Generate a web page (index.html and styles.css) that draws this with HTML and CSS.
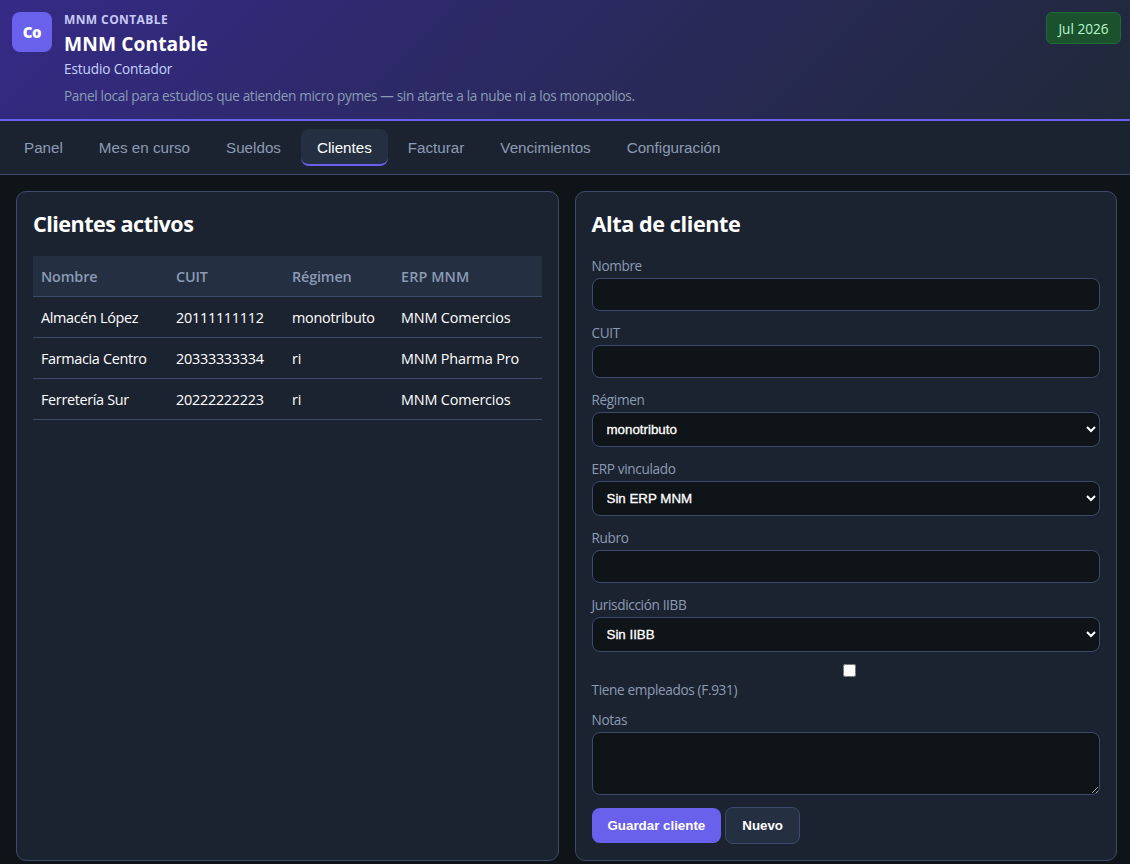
FILE: index.html
```html
<!DOCTYPE html>
<html lang="es">
<head>
    <meta charset="UTF-8">
    <meta name="viewport" content="width=device-width, initial-scale=1.0">
    <title>MNM Contable</title>
    <link rel="stylesheet" href="styles.css">
</head>
<body>
    <header class="app-header">
        <div class="logo">Co</div>
        <div class="brand">
            <div class="suite">MNM CONTABLE</div>
            <h1>MNM Contable</h1>
            <div class="subtitle">Estudio Contador</div>
            <p class="tagline">Panel local para estudios que atienden micro pymes — sin atarte a la nube ni a los monopolios.</p>
        </div>
        <span class="badge">Jul 2026</span>
    </header>

    <nav class="tabs">
        <button class="tab">Panel</button>
        <button class="tab">Mes en curso</button>
        <button class="tab">Sueldos</button>
        <button class="tab active">Clientes</button>
        <button class="tab">Facturar</button>
        <button class="tab">Vencimientos</button>
        <button class="tab">Configuración</button>
    </nav>

    <main class="grid">
        <section class="panel">
            <h2>Clientes activos</h2>
            <table class="clients">
                <colgroup>
                    <col class="col-name">
                    <col class="col-cuit">
                    <col class="col-regime">
                    <col>
                </colgroup>
                <thead>
                    <tr><th>Nombre</th><th>CUIT</th><th>Régimen</th><th>ERP MNM</th></tr>
                </thead>
                <tbody>
                    <tr><td>Almacén López</td><td>20111111112</td><td>monotributo</td><td>MNM Comercios</td></tr>
                    <tr><td>Farmacia Centro</td><td>20333333334</td><td>ri</td><td>MNM Pharma Pro</td></tr>
                    <tr><td>Ferretería Sur</td><td>20222222223</td><td>ri</td><td>MNM Comercios</td></tr>
                </tbody>
            </table>
        </section>

        <section class="panel">
            <h2 class="form-title">Alta de cliente</h2>
            <form class="client-form">
                <label>Nombre
                    <input type="text" name="nombre">
                </label>
                <label>CUIT
                    <input type="text" name="cuit">
                </label>
                <label>Régimen
                    <select name="regimen">
                        <option>monotributo</option>
                        <option>ri</option>
                    </select>
                </label>
                <label>ERP vinculado
                    <select name="erp">
                        <option>Sin ERP MNM</option>
                        <option>MNM Comercios</option>
                        <option>MNM Pharma Pro</option>
                    </select>
                </label>
                <label>Rubro
                    <input type="text" name="rubro">
                </label>
                <label>Jurisdicción IIBB
                    <select name="iibb">
                        <option>Sin IIBB</option>
                    </select>
                </label>
                <label class="check">
                    <input type="checkbox" name="empleados">
                    Tiene empleados (F.931)
                </label>
                <label>Notas
                    <textarea name="notas"></textarea>
                </label>
                <div class="actions">
                    <button type="button" class="btn primary">Guardar cliente</button>
                    <button type="button" class="btn">Nuevo</button>
                </div>
            </form>
        </section>
    </main>
</body>
</html>
```

FILE: styles.css
```css
:root {
    --bg: #0f1419;
    --surface: #1c2330;
    --surface-2: #242f42;
    --border: #3d4a6b;
    --text: #ffffff;
    --muted: #8b9bb4;
    --accent: #6960ec;
}
* {
    box-sizing: border-box;
}
body {
    margin: 0;
    background: var(--bg);
    color: var(--text);
    font-family: "Segoe UI", "Open Sans", "Noto Sans", sans-serif;
    overflow: hidden;
}
h1, h2, p {
    margin: 0;
}
.app-header {
    display: flex;
    align-items: flex-start;
    gap: 12px;
    height: 121px;
    padding: 12px 9px 0 12px;
    background: linear-gradient(135deg, #352a86 0%, #202938 100%);
    border-bottom: 2px solid var(--accent);
}
.logo {
    width: 40px;
    height: 40px;
    border-radius: 8px;
    background: var(--accent);
    font-size: 15px;
    font-weight: 800;
    line-height: 41px;
    text-align: center;
    letter-spacing: -0.3px;
}
.brand {
    flex: 1;
}
.suite {
    color: #c7c9f5;
    font-size: 12px;
    font-weight: 700;
    line-height: 16px;
    letter-spacing: 0.4px;
}
.brand h1 {
    font-size: 19.2px;
    line-height: 26px;
    letter-spacing: 0.1px;
    margin-top: 3px;
}
.subtitle {
    color: #c7d2fe;
    font-size: 13.6px;
    line-height: 18px;
    letter-spacing: -0.13px;
    margin-top: 3px;
}
.tagline {
    color: var(--muted);
    font-size: 13.6px;
    line-height: 18px;
    letter-spacing: -0.34px;
    margin-top: 9px;
}
.badge {
    width: 75px;
    height: 32px;
    border: 1px solid #1f6b37;
    border-radius: 6px;
    background: #1b512d;
    color: #b7f7cb;
    font-size: 13.6px;
    line-height: 32px;
    text-align: center;
}
.tabs {
    display: flex;
    gap: 4px;
    padding: 8px;
    background: var(--surface);
    border-bottom: 1px solid var(--border);
}
.tab {
    height: 37px;
    padding: 2px 16px 0;
    border: 0;
    border-bottom: 2px solid transparent;
    border-radius: 8px;
    background: transparent;
    color: var(--muted);
    font-family: Arial, "Liberation Sans", sans-serif;
    font-size: 15.2px;
}
.tab.active {
    background: var(--surface-2);
    border-bottom-color: var(--accent);
    color: var(--text);
}
.grid {
    display: grid;
    grid-template-columns: 1fr 1fr;
    gap: 16px;
    padding: 16px 13px 0 16px;
}
.panel {
    height: 670px;
    padding: 16px;
    background: var(--surface);
    border: 1px solid var(--border);
    border-radius: 10px;
}
.panel h2 {
    font-size: 21.6px;
    line-height: 32px;
    letter-spacing: -0.53px;
    margin-bottom: 16px;
}
.panel .form-title {
    letter-spacing: -0.4px;
}
.clients {
    width: 100%;
    table-layout: fixed;
    border-collapse: separate;
    border-spacing: 0;
    font-size: 14.4px;
    letter-spacing: -0.25px;
}
.col-name {
    width: 135px;
}
.col-cuit {
    width: 116px;
}
.col-regime {
    width: 109px;
}
.clients th, .clients td {
    height: 41px;
    padding: 1px 8px 0;
    border-bottom: 1px solid var(--border);
    text-align: left;
    white-space: nowrap;
}
.clients td:first-child {
    letter-spacing: -0.33px;
}
.clients td:last-child {
    letter-spacing: -0.15px;
}
.clients th {
    background: var(--surface-2);
    color: var(--muted);
    font-weight: 600;
    letter-spacing: -0.15px;
}
.clients th:last-child {
    letter-spacing: 0.1px;
}
.client-form {
    display: flex;
    flex-direction: column;
    gap: 12px;
}
.client-form label {
    display: block;
    color: var(--muted);
    font-size: 13.6px;
    line-height: 19px;
    letter-spacing: -0.35px;
}
.client-form input, .client-form select, .client-form textarea {
    display: block;
    width: 100%;
    height: 33px;
    margin-top: 3px;
    padding: 8px 10px;
    background: var(--bg);
    border: 1px solid var(--border);
    border-radius: 8px;
    color: var(--text);
    font-family: Arial, "Liberation Sans", sans-serif;
    font-size: 13.333px;
}
.client-form select {
    height: 35px;
    letter-spacing: 0;
    -webkit-text-stroke: 0.3px currentColor;
}
.client-form textarea {
    height: 63px;
}
.client-form .check {
    line-height: 17px;
}
.client-form .check input {
    width: 13px;
    height: 13px;
    margin: 0 0 4px calc(50% - 3px);
}
.actions {
    display: flex;
    align-items: center;
    gap: 4px;
}
.btn {
    height: 37px;
    padding: 0 16px;
    background: var(--surface-2);
    border: 1px solid var(--border);
    border-radius: 8px;
    color: var(--text);
    font-family: Arial, "Liberation Sans", sans-serif;
    font-size: 13.333px;
    font-weight: 700;
}
.btn.primary {
    height: 35px;
    background: var(--accent);
    border: 0;
}
```
